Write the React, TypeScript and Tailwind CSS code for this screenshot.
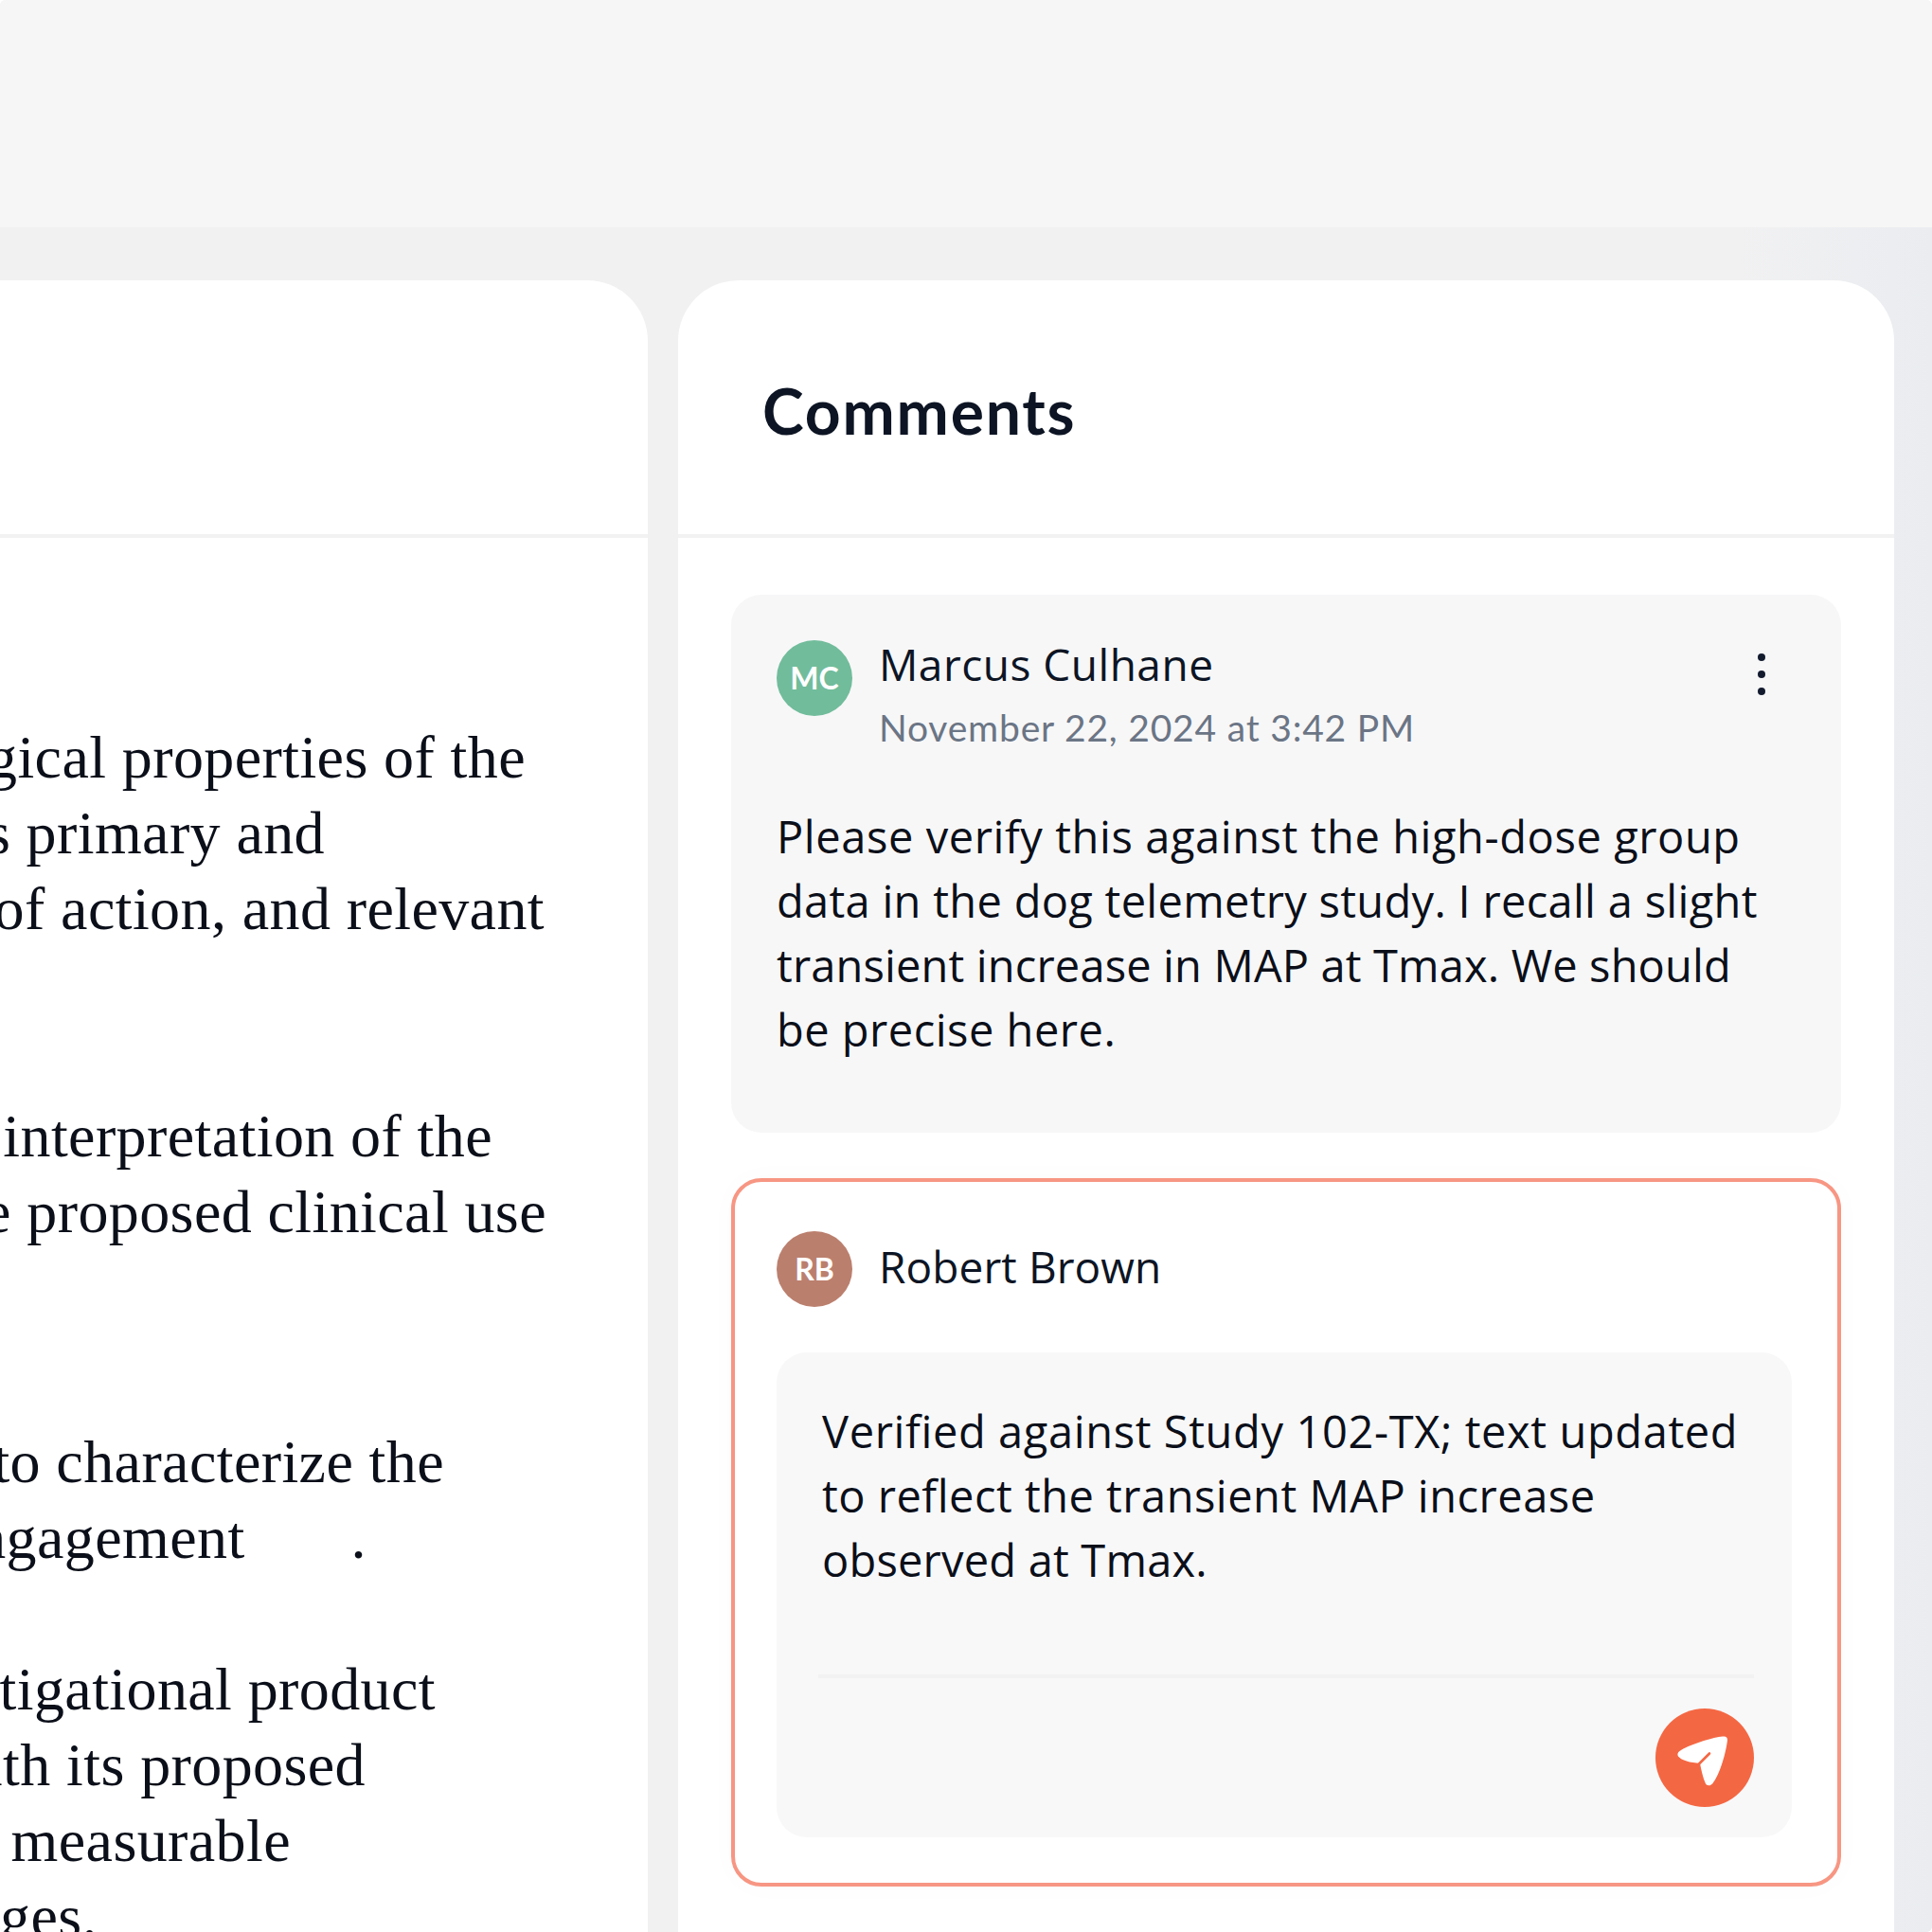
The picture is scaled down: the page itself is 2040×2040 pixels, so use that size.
const lines = [
  { text: 'This section describes the toxicological properties of the', end: 'w-[555px]', gap: '' },
  { text: 'including its primary and', end: 'w-[343px]', gap: '' },
  { text: 'mechanism of action, and relevant', end: 'w-[575px]', gap: '' },
  { text: 'Supports the interpretation of the', end: 'w-[520px]', gap: 'mt-[160px]' },
  { text: 'studies and the proposed clinical use', end: 'w-[577px]', gap: '' },
  { text: 'were conducted to characterize the', end: 'w-[469px]', gap: 'mt-[184px]' },
  { text: 'target engagement', end: 'w-[387px]', gap: '', tail: true },
  { text: 'of the investigational product', end: 'w-[460px]', gap: 'mt-[80px]' },
  { text: 'consistent with its proposed', end: 'w-[386px]', gap: '' },
  { text: 'and produced measurable', end: 'w-[307px]', gap: '' },
  { text: 'changes.', end: 'w-[103px]', gap: '' },
];

const comment = [
  { text: 'Please verify this against the high-dose group', track: 'tracking-[0.58px]' },
  { text: 'data in the dog telemetry study. I recall a slight', track: 'tracking-[0.3px]' },
  { text: 'transient increase in MAP at Tmax. We should', track: 'tracking-[0.15px]' },
  { text: 'be precise here.', track: 'tracking-[0.5px]' },
];

const reply = [
  { text: 'Verified against Study 102-TX; text updated', track: 'tracking-[0.62px]' },
  { text: 'to reflect the transient MAP increase', track: 'tracking-[0.5px]' },
  { text: 'observed at Tmax.', track: 'tracking-[0.2px]' },
];

function SendIcon() {
  return (
    <svg viewBox="0 0 104 104" className="h-[104px] w-[104px]">
      <circle cx="52" cy="52" r="52" fill="#f46743" />
      <path
        d="M71 29.5C75 29 76.5 30.5 75.8 35C73.5 51 67 71 60.5 79C57.5 82.5 54 81.5 52.8 79C50.2 73.5 48.5 65.5 47 58L36 56.5C30.5 55.2 26 53 24 50.5C22.5 48 24 45.5 27 44C38 37.5 60 30.5 71 29.5Z"
        fill="#ffffff"
      />
      <path d="M57 47.5L45 59.5" stroke="#f46743" strokeWidth="2.6" strokeLinecap="round" />
    </svg>
  );
}

function Avatar({ initials, color }: { initials: string; color: string }) {
  return (
    <div className={`flex h-20 w-20 shrink-0 items-center justify-center rounded-full font-['Lato',sans-serif] text-[32px] font-bold text-white ${color}`}>
      {initials}
    </div>
  );
}

export default function App() {
  return (
    <div className="flex h-[2040px] w-[2040px] flex-col overflow-hidden rounded-[6px] bg-[#f1f1f2]">
      <div className="h-[240px] shrink-0 bg-[#f6f6f6]" />
      <div className="flex flex-1 gap-8 bg-gradient-to-r from-[#f1f1f2] from-[90%] to-[#eaecf0] pt-14">
        {/* document panel, runs off the left of the page */}
        <section className="-ml-[64px] flex w-[748px] shrink-0 flex-col rounded-t-[64px] bg-white">
          <div className="h-[272px] shrink-0 border-b-4 border-[#f2f2f3]" />
          <div className="pl-[64px] pt-[192px] font-['Liberation_Serif',serif] text-[64px] leading-[80px] tracking-[0.4px] text-[#0b0f19]">
            {lines.map((line, i) => (
              <div key={i} className={`flex justify-end whitespace-nowrap ${line.end} ${line.gap}`}>
                {line.text}
                {line.tail && <span className="ml-[112px]">.</span>}
              </div>
            ))}
          </div>
        </section>

        {/* comments */}
        <section className="flex w-[1284px] shrink-0 flex-col rounded-t-[64px] bg-white font-['Open_Sans',sans-serif]">
          <div className="flex h-[272px] shrink-0 items-center border-b-4 border-[#f2f2f3] pl-[89px]">
            <h2 className="mt-2 font-['Lato',sans-serif] text-[66px] font-bold leading-none tracking-[1.8px] text-[#0d1524]">Comments</h2>
          </div>
          <div className="flex flex-col gap-12 px-14 pt-[60px]">
            <article className="h-[568px] rounded-[32px] bg-[#f7f7f8] p-12">
              <div className="flex items-start gap-7">
                <Avatar initials="MC" color="bg-[#71bc9b]" />
                <div className="flex-1">
                  <div className="-mt-[3px] text-[46px] leading-[56px] tracking-[0.5px] text-[#0d1524]">Marcus Culhane</div>
                  <div className="mt-[13px] font-['Lato',sans-serif] text-[39px] leading-[52px] tracking-[0.8px] text-[#6b7585]">November 22, 2024 at 3:42 PM</div>
                </div>
                <div className="mr-[32px] mt-[14px] flex flex-col gap-[10px]">
                  <span className="h-2 w-2 rounded-full bg-[#131b2e]" />
                  <span className="h-2 w-2 rounded-full bg-[#131b2e]" />
                  <span className="h-2 w-2 rounded-full bg-[#131b2e]" />
                </div>
              </div>
              <div className="mt-[55px] whitespace-nowrap text-[47px] leading-[68px] text-[#0b0f19]">
                {comment.map((l) => (
                  <p key={l.text} className={l.track}>
                    {l.text}
                  </p>
                ))}
              </div>
            </article>

            <article className="h-[748px] rounded-[32px] border-4 border-[#f79683] bg-white pb-12 pl-11 pr-12 pt-[52px] shadow-[0_0_32px_rgba(0,0,0,0.02)]">
              <div className="flex items-center gap-7">
                <Avatar initials="RB" color="bg-[#bb7f6e]" />
                <div className="-mt-[7px] text-[46px] leading-[56px] tracking-[0.1px] text-[#0d1524]">Robert Brown</div>
              </div>
              <div className="mt-12 flex h-[512px] flex-col rounded-[32px] bg-[#f8f8f9] pb-8 pl-11 pr-10 pt-[49px]">
                <div className="h-[291px] whitespace-nowrap pl-1 text-[47px] leading-[68px] text-[#0b0f19]">
                  {reply.map((l) => (
                    <p key={l.text} className={l.track}>
                      {l.text}
                    </p>
                  ))}
                </div>
                <div className="flex flex-1 flex-col items-end border-t-4 border-[#f2f2f3] pt-8">
                  <SendIcon />
                </div>
              </div>
            </article>
          </div>
        </section>
      </div>
    </div>
  );
}
